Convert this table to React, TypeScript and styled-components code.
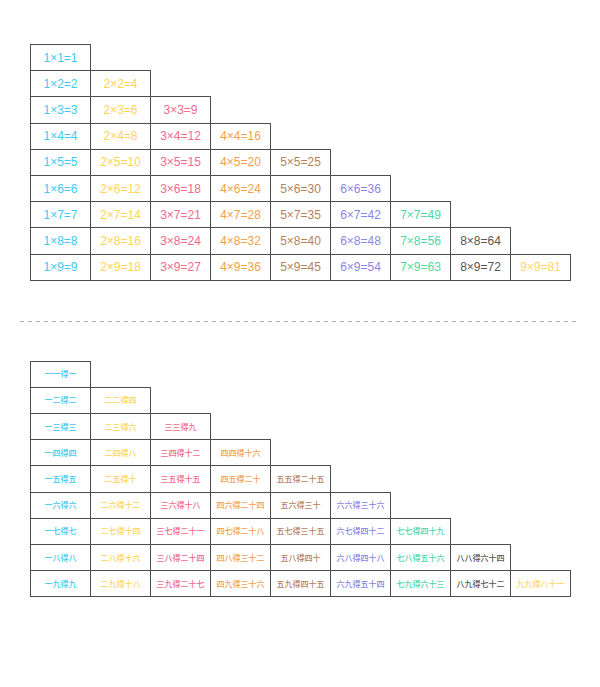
import React from 'react';
import styled, { createGlobalStyle } from 'styled-components';

const GlobalStyle = createGlobalStyle`
  html, body {
    margin: 0;
    padding: 0;
    background: #ffffff;
  }
`;

const columnColors = [
  '#43c8f2',
  '#ffd454',
  '#f4698b',
  '#f6a04b',
  '#b5825c',
  '#8787e4',
  '#4dd8a3',
  '#555555',
  '#ffd766',
];

const digits = ['', '一', '二', '三', '四', '五', '六', '七', '八', '九'];

const toChinese = (n: number): string => {
  if (n < 10) return digits[n];
  const tens = Math.floor(n / 10);
  const ones = n % 10;
  return (tens > 1 ? digits[tens] : '') + '十' + digits[ones];
};

const Page = styled.div`
  padding: 44px 20px 0;
`;

const Section = styled.div`
  padding: 0 10px;
`;

const Table = styled.table`
  border-collapse: collapse;
  table-layout: fixed;
`;

const Row = styled.tr`
  height: 26.2px;
`;

const Cell = styled.td<{ $color: string; $small?: boolean }>`
  width: 60px;
  min-width: 60px;
  box-sizing: border-box;
  padding: 0;
  border: 1px solid #4e4e4e;
  text-align: center;
  vertical-align: middle;
  white-space: nowrap;
  color: ${p => p.$color};
  font-family: ${p => (p.$small
    ? '"Noto Sans CJK SC", "Noto Sans", sans-serif'
    : '"Liberation Sans", Arial, sans-serif')};
  font-size: ${p => (p.$small ? '8px' : '12px')};
  font-weight: ${p => (p.$small ? 500 : 400)};
  line-height: 1;
`;

const Divider = styled.div`
  height: 1px;
  margin: 40px 0 39px;
  background: repeating-linear-gradient(
    to right,
    #b4b4b4 0,
    #b4b4b4 4px,
    transparent 4px,
    transparent 8px
  );
`;

const rows = Array.from({ length: 9 }, (_, i) => i + 1);

const MultiplicationTable: React.FC<{ chinese?: boolean }> = ({ chinese }) => (
  <Table>
    <tbody>
      {rows.map(i => (
        <Row key={i}>
          {Array.from({ length: i }, (_, k) => k + 1).map(j => (
            <Cell key={j} $color={columnColors[j - 1]} $small={chinese}>
              {chinese
                ? `${digits[j]}${digits[i]}得${toChinese(i * j)}`
                : `${j}×${i}=${i * j}`}
            </Cell>
          ))}
        </Row>
      ))}
    </tbody>
  </Table>
);

export default function App() {
  return (
    <>
      <GlobalStyle />
      <Page>
        <Section>
          <MultiplicationTable />
        </Section>
        <Divider />
        <Section>
          <MultiplicationTable chinese />
        </Section>
      </Page>
    </>
  );
}
